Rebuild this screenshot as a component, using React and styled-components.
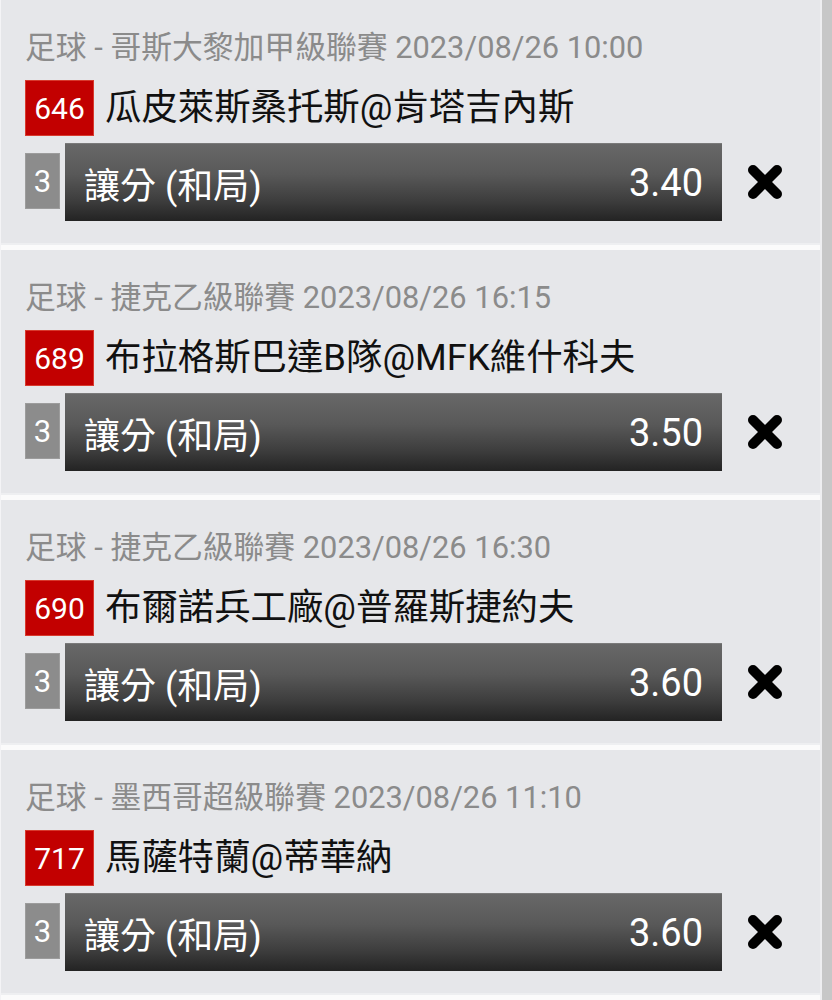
import React from "react";
import styled, { createGlobalStyle } from "styled-components";

const Global = createGlobalStyle`
  html, body { margin: 0; padding: 0; background: #e6e7ea; overflow: hidden; }
  body { font-family: Roboto, "Noto Sans CJK TC", sans-serif; }
  * { box-sizing: border-box; }
`;

const Page = styled.div`
  display: flex;
  width: 832px;
  height: 1000px;
  overflow: hidden;
`;

const List = styled.div`
  flex: 1;
  display: flex;
  flex-direction: column;
  border-left: 1px solid #f4f4f6;
  border-right: 2px solid #eeeef0;
`;

const Scrollbar = styled.div`
  width: 10px;
  flex: none;
  background: #c7c7c7;
`;

const Card = styled.div`
  flex: none;
  height: 250px;
  display: flex;
  flex-direction: column;
  padding: 30px 0 0 24px;
  background: #e6e7ea;
  border-bottom: 5px solid #fbfbfb;
  box-shadow: inset 0 -2px 0 #eeeff1;
`;

const Header = styled.div`
  height: 36px;
  line-height: 36px;
  font-size: 30.8px;
  color: #8b8b8b;
  white-space: nowrap;
`;

const MatchRow = styled.div`
  margin-top: 14px;
  height: 56px;
  display: flex;
  align-items: center;
  gap: 11px;
`;

const Badge = styled.div`
  width: 69px;
  height: 56px;
  display: flex;
  align-items: center;
  justify-content: center;
  background: #c20000;
  border: 1px solid #d83a2e;
  color: #fff;
  font-size: 30px;
`;

const Teams = styled.div`
  font-size: 36.4px;
  color: #111;
  white-space: nowrap;
  line-height: 56px;
`;

const BetRow = styled.div`
  margin-top: 7px;
  height: 78px;
  display: flex;
  align-items: flex-start;
`;

const Count = styled.div`
  margin-top: 10px;
  width: 35px;
  height: 56px;
  display: flex;
  align-items: center;
  justify-content: center;
  background: #8c8c8c;
  border: 1px solid #9c9c9c;
  color: #fff;
  font-size: 31px;
`;

const Bar = styled.div`
  margin-left: 5px;
  width: 657px;
  height: 78px;
  display: flex;
  align-items: center;
  justify-content: space-between;
  padding: 0 19px;
  background: linear-gradient(to bottom, #686868 0%, #585858 40%, #3c3c3c 75%, #232323 100%);
  border-top: 1px solid #7a7a7a;
  color: #fff;
`;

const BetLabel = styled.span`
  font-size: 36px;
`;

const Odds = styled.span`
  font-size: 38px;
`;

const Remove = styled.div`
  width: 86px;
  height: 78px;
  display: flex;
  align-items: center;
  justify-content: center;
`;

const NextCard = styled.div`
  flex: 1;
  background: #e6e7ea;
  border-top: 3px solid #d8484a;
`;

const CloseIcon = () => (
  <svg width="36" height="36" viewBox="0 0 36 36">
    <g stroke="#000" strokeWidth="10" strokeLinecap="round">
      <line x1="6" y1="6" x2="30" y2="30" />
      <line x1="30" y1="6" x2="6" y2="30" />
    </g>
  </svg>
);

const bets = [
  { league: "足球 - 哥斯大黎加甲級聯賽 2023/08/26 10:00", no: "646", teams: "瓜皮萊斯桑托斯@肯塔吉內斯", odds: "3.40" },
  { league: "足球 - 捷克乙級聯賽 2023/08/26 16:15", no: "689", teams: "布拉格斯巴達B隊@MFK維什科夫", odds: "3.50" },
  { league: "足球 - 捷克乙級聯賽 2023/08/26 16:30", no: "690", teams: "布爾諾兵工廠@普羅斯捷約夫", odds: "3.60" },
  { league: "足球 - 墨西哥超級聯賽 2023/08/26 11:10", no: "717", teams: "馬薩特蘭@蒂華納", odds: "3.60" },
];

export default function App() {
  return (
    <>
      <Global />
      <Page>
        <List>
          {bets.map((b) => (
            <Card key={b.no}>
              <Header>{b.league}</Header>
              <MatchRow>
                <Badge>{b.no}</Badge>
                <Teams>{b.teams}</Teams>
              </MatchRow>
              <BetRow>
                <Count>3</Count>
                <Bar>
                  <BetLabel>讓分 (和局)</BetLabel>
                  <Odds>{b.odds}</Odds>
                </Bar>
                <Remove>
                  <CloseIcon />
                </Remove>
              </BetRow>
            </Card>
          ))}
          <NextCard />
        </List>
        <Scrollbar />
      </Page>
    </>
  );
}
